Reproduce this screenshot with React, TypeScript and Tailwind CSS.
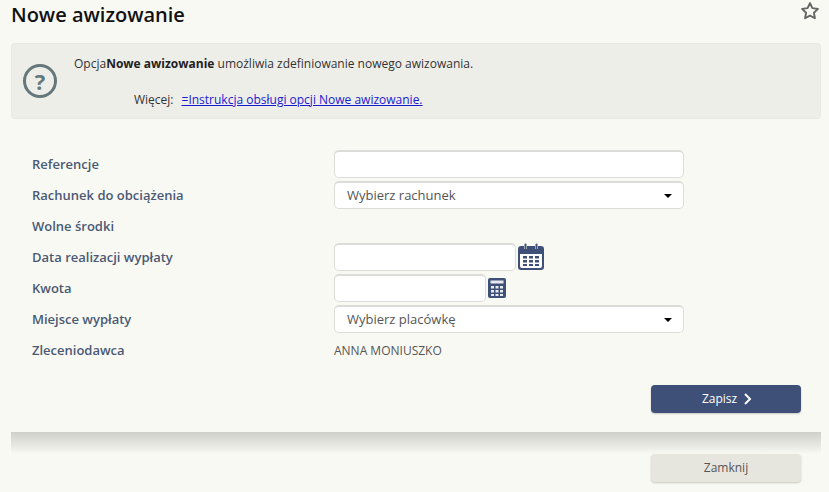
import type { ReactNode } from "react";

function Row({ label, children }: { label: string; children?: ReactNode }) {
  return (
    <div className="flex h-[31px] items-center">
      <div className="w-[302px] text-[13px] font-semibold text-[#4a5a75]">{label}</div>
      <div className="flex items-center">{children}</div>
    </div>
  );
}

function TextBox({ width }: { width: string }) {
  return <div className={`mb-px h-[28px] rounded-[5px] border border-[#dcdcd8] border-t-2 bg-white ${width}`} />;
}

function Select({ text }: { text: string }) {
  return (
    <div className="mb-px flex h-[28px] w-[350px] items-center justify-between rounded-[5px] border border-[#dcdcd8] border-t-2 bg-white pl-3 pr-[11px] text-[13px] text-[#555]">
      <span>{text}</span>
      <span className="h-0 w-0 border-x-4 border-t-[4px] border-x-transparent border-t-black" />
    </div>
  );
}

function CalendarIcon() {
  return (
    <svg width="26" height="27" viewBox="0 0 26 27" className="mb-[2px] ml-[2px]">
      <path fill="#3f5078" d="M3 3h3v3h3V3h8v3h3V3h3a3 3 0 0 1 3 3v18a3 3 0 0 1-3 3H3a3 3 0 0 1-3-3V6a3 3 0 0 1 3-3z" />
      <rect x="6.5" y="0.5" width="2" height="6" rx="1" fill="#3f5078" />
      <rect x="17.5" y="0.5" width="2" height="6" rx="1" fill="#3f5078" />
      <path fill="#fff" d="M2 11h22v12a2 2 0 0 1-2 2H4a2 2 0 0 1-2-2z" />
      <path fill="#3f5078" d="M5 13h4v2.500H5zM11 13h4v2.500h-4zM17 13h4v2.500h-4zM5 17h4v2.500H5zM11 17h4v2.500h-4zM17 17h4v2.500h-4zM5 21h4v2H5zM11 21h4v2h-4zM17 21h4v2h-4z" />
    </svg>
  );
}

function CalculatorIcon() {
  return (
    <svg width="18" height="20" viewBox="0 0 18 20" className="mb-[2px] ml-[2px]">
      <rect width="18" height="20" rx="2" fill="#3f5078" />
      <rect x="2.500" y="2.500" width="13" height="3" fill="#e8eaf0" />
      <path fill="#e8eaf0" d="M3 8h3v2.500H3zM7.500 8h3v2.500h-3zM12 8h3v2.500h-3zM3 12h3v2.500H3zM7.500 12h3v2.500h-3zM12 12h3v2.500h-3zM3 16h3v2H3zM7.500 16h3v2h-3zM12 16h3v2h-3z" />
    </svg>
  );
}

export default function App() {
  return (
    <div className="relative h-[492px] w-[829px] overflow-hidden bg-[#f9f9f3] font-['Open_Sans',sans-serif]">
      <div className="flex h-[43px] items-start justify-between pl-[11px] pr-[9px]">
        <h1 className="text-[20px] leading-[30px] font-semibold text-[#111]">Nowe awizowanie</h1>
        <svg width="20" height="20" viewBox="0 0 24 24" fill="none" stroke="#666" strokeWidth="2.300" strokeLinejoin="round" className="mt-[1px]">
          <path d="M12 2.500l2.900 6.100 6.600.9-4.800 4.600 1.200 6.600L12 17.500l-5.900 3.200 1.200-6.600-4.800-4.600 6.600-.9z" />
        </svg>
      </div>

      <div className="mx-[11px] flex h-[76px] w-[810px] rounded-[4px] border border-[#e8e8e2] bg-[#eeeee9]">
        <div className="flex w-[62px] items-center pl-[11px]">
          <div className="flex h-[34px] w-[34px] items-center justify-center rounded-full border-[3px] border-[#64777a] text-[22px] leading-none font-bold text-[#64777a]">
            ?
          </div>
        </div>
        <div className="text-[12px] text-[#333]">
          <p className="mt-[10px] leading-[20px]">
            Opcja<b className="font-bold text-[#222]">Nowe awizowanie</b> umożliwia zdefiniowanie nowego awizowania.
          </p>
          <p className="mt-[16px] ml-[60px] leading-[20px]">
            Więcej:
            <a href="#" className="ml-2 text-[#1a1ad0] underline">=Instrukcja obsługi opcji Nowe awizowanie.</a>
          </p>
        </div>
      </div>

      <div className="mt-[30px] pl-[32px]">
        <Row label="Referencje"><TextBox width="w-[350px]" /></Row>
        <Row label="Rachunek do obciążenia"><Select text="Wybierz rachunek" /></Row>
        <Row label="Wolne środki" />
        <Row label="Data realizacji wypłaty">
          <TextBox width="w-[182px]" />
          <CalendarIcon />
        </Row>
        <Row label="Kwota">
          <TextBox width="w-[152px]" />
          <CalculatorIcon />
        </Row>
        <Row label="Miejsce wypłaty"><Select text="Wybierz placówkę" /></Row>
        <Row label="Zleceniodawca">
          <span className="text-[12px] text-[#555]">ANNA MONIUSZKO</span>
        </Row>
      </div>

      <div className="mt-[19px] flex justify-end pr-[28px]">
        <button className="flex h-[28px] w-[150px] items-center justify-center gap-[6px] rounded-[4px] bg-[#3f5078] pl-[2px] text-[12px] text-white shadow-[0_1px_2px_rgba(0,0,0,0.2)]">
          Zapisz
          <svg width="9" height="12" viewBox="0 0 9 12" fill="none" stroke="#fff" strokeWidth="2">
            <path d="M2 1l5 5-5 5" />
          </svg>
        </button>
      </div>

      <div className="mx-[11px] mt-[19px] h-[22px] w-[810px] bg-gradient-to-b from-[#cfcfca] to-[#f9f9f3]" />

      <div className="flex justify-end pr-[28px]">
        <button className="h-[28px] w-[150px] rounded-[4px] bg-[#e6e6de] text-[12px] text-[#555] shadow-[0_1px_2px_rgba(0,0,0,0.2)]">
          Zamknij
        </button>
      </div>
    </div>
  );
}
